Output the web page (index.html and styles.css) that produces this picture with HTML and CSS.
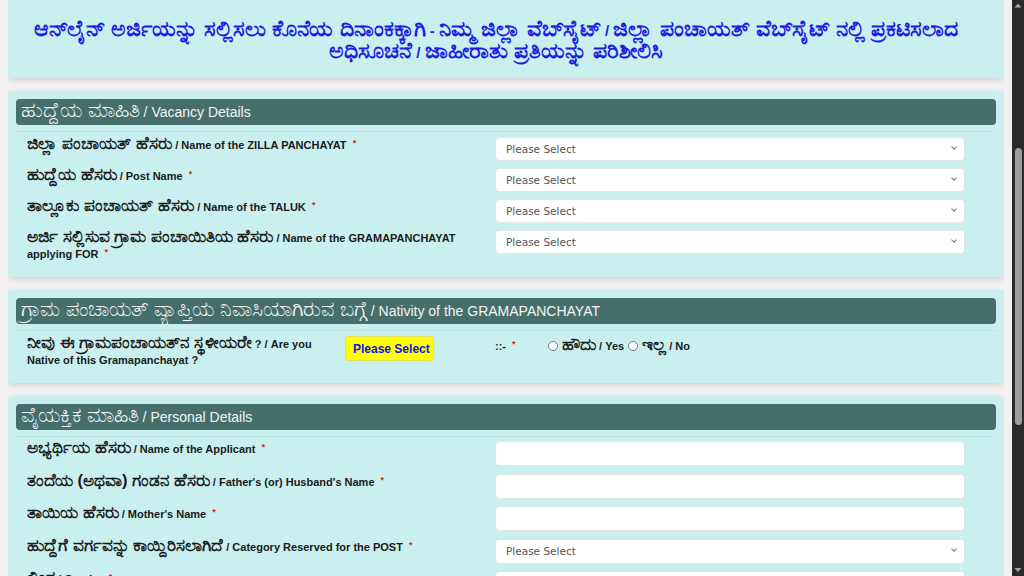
FILE: index.html
```html
<!DOCTYPE html>
<html lang="kn">
<head>
<meta charset="utf-8">
<title>Application Form</title>
<link rel="stylesheet" href="styles.css">
</head>
<body>
<div class="page">
  <div class="card notice">
    <p class="notice-text"><span class="kn">ಆನ್‍ಲೈನ್ ಅರ್ಜಿಯನ್ನು ಸಲ್ಲಿಸಲು ಕೊನೆಯ ದಿನಾಂಕಕ್ಕಾಗಿ</span> - <span class="kn">ನಿಮ್ಮ ಜಿಲ್ಲಾ ವೆಬ್‍ಸೈಟ್</span> / <span class="kn">ಜಿಲ್ಲಾ ಪಂಚಾಯತ್ ವೆಬ್‍ಸೈಟ್ ನಲ್ಲಿ ಪ್ರಕಟಿಸಲಾದ ಅಧಿಸೂಚನೆ</span> / <span class="kn">ಜಾಹೀರಾತು ಪ್ರತಿಯನ್ನು ಪರಿಶೀಲಿಸಿ</span></p>
  </div>

  <div class="card">
    <div class="card-head"><span class="kn">ಹುದ್ದೆಯ ಮಾಹಿತಿ</span> / Vacancy Details</div>
    <div class="card-body">
      <div class="row">
        <label class="lbl"><span class="kn">ಜಿಲ್ಲಾ ಪಂಚಾಯತ್ ಹೆಸರು</span> / Name of the ZILLA PANCHAYAT <span class="req">*</span></label>
        <div class="sel-wrap"><select class="ctl"><option>Please Select</option></select></div>
      </div>
      <div class="row">
        <label class="lbl"><span class="kn">ಹುದ್ದೆಯ ಹೆಸರು</span> / Post Name <span class="req">*</span></label>
        <div class="sel-wrap"><select class="ctl"><option>Please Select</option></select></div>
      </div>
      <div class="row">
        <label class="lbl"><span class="kn">ತಾಲ್ಲೂಕು ಪಂಚಾಯತ್ ಹೆಸರು</span> / Name of the TALUK <span class="req">*</span></label>
        <div class="sel-wrap"><select class="ctl"><option>Please Select</option></select></div>
      </div>
      <div class="row">
        <label class="lbl"><span class="kn">ಅರ್ಜಿ ಸಲ್ಲಿಸುವ ಗ್ರಾಮ ಪಂಚಾಯಿತಿಯ ಹೆಸರು</span> / Name of the GRAMAPANCHAYAT applying FOR <span class="req">*</span></label>
        <div class="sel-wrap"><select class="ctl"><option>Please Select</option></select></div>
      </div>
    </div>
  </div>

  <div class="card">
    <div class="card-head"><span class="kn">ಗ್ರಾಮ ಪಂಚಾಯತ್ ವ್ಯಾಪ್ತಿಯ ನಿವಾಸಿಯಾಗಿರುವ ಬಗ್ಗೆ</span> / Nativity of the GRAMAPANCHAYAT</div>
    <div class="card-body">
      <div class="row native-row">
        <label class="lbl"><span class="kn">ನೀವು ಈ ಗ್ರಾಮಪಂಚಾಯತ್‍ನ ಸ್ಥಳೀಯರೇ</span> ? / Are you Native of this Gramapanchayat ?</label>
        <div class="yellow-cell"><select class="yellow-select"><option>Please Select</option></select></div>
        <div class="sep">::- <span class="req">*</span></div>
        <div class="radios">
          <label class="radio"><input type="radio" name="native"> <span><span class="kn">ಹೌದು</span> / Yes</span></label>
          <label class="radio"><input type="radio" name="native"> <span><span class="kn">ಇಲ್ಲ</span> / No</span></label>
        </div>
      </div>
    </div>
  </div>

  <div class="card">
    <div class="card-head"><span class="kn">ವೈಯಕ್ತಿಕ ಮಾಹಿತಿ</span> / Personal Details</div>
    <div class="card-body personal">
      <div class="row">
        <label class="lbl"><span class="kn">ಅಭ್ಯರ್ಥಿಯ ಹೆಸರು</span> / Name of the Applicant <span class="req">*</span></label>
        <input class="ctl" type="text">
      </div>
      <div class="row">
        <label class="lbl"><span class="kn">ತಂದೆಯ (ಅಥವಾ) ಗಂಡನ ಹೆಸರು</span> / Father's (or) Husband's Name <span class="req">*</span></label>
        <input class="ctl" type="text">
      </div>
      <div class="row">
        <label class="lbl"><span class="kn">ತಾಯಿಯ ಹೆಸರು</span> / Mother's Name <span class="req">*</span></label>
        <input class="ctl" type="text">
      </div>
      <div class="row">
        <label class="lbl"><span class="kn">ಹುದ್ದೆಗೆ ವರ್ಗವನ್ನು ಕಾಯ್ದಿರಿಸಲಾಗಿದೆ</span> / Category Reserved for the POST <span class="req">*</span></label>
        <div class="sel-wrap"><select class="ctl"><option>Please Select</option></select></div>
      </div>
      <div class="row">
        <label class="lbl"><span class="kn">ಲಿಂಗ</span> / Gender <span class="req">*</span></label>
        <div class="sel-wrap"><select class="ctl"><option>Please Select</option></select></div>
      </div>
    </div>
  </div>
</div>

<svg class="scrollbar" width="12" height="576" viewBox="0 0 12 576" aria-hidden="true">
  <rect x="0" y="0" width="12" height="576" fill="#2a2a2a"/>
  <path d="M2.5 7.5 L6 3.5 L9.5 7.5 Z" fill="#a3a3a3"/>
  <rect x="3" y="148" width="7" height="277" rx="3.5" fill="#9e9e9e"/>
  <path d="M2.5 568 L9.5 568 L6 572 Z" fill="#a3a3a3"/>
</svg>
</body>
</html>
```

FILE: styles.css
```css
html {
  background: #f1f1f1;
  overflow: hidden;
}

body {
  margin: 0 20px 0 8px;
  font-family: "Liberation Sans", Arial, sans-serif;
  color: #1a1a1a;
  background: #f1f1f1;
}

.kn {
  font-size: 1.5em;
  line-height: 0;
}

.card {
  background: #c9f0ef;
  border-radius: 4px;
  box-shadow: 0 2px 6px rgba(0, 0, 0, 0.14);
  padding: 8px;
  margin-bottom: 13px;
}

.notice {
  padding: 20px 28px 14px 8px;
}

.notice-text {
  margin: 0;
  text-align: center;
  color: #1c1ce6;
  font-weight: bold;
  font-size: 15px;
  line-height: 22px;
}

.notice-text .kn {
  font-size: 1.45em;
}

.card-head {
  background: #466f6b;
  color: #f4f4f4;
  border-radius: 4px;
  height: 26px;
  line-height: 26px;
  padding: 0 5px;
  font-size: 14px;
  white-space: nowrap;
  overflow: hidden;
}

.card-head .kn {
  font-size: 1.47em;
}

.card-body {
  margin-top: 6px;
  border-top: 1px solid rgba(0, 70, 70, 0.06);
  padding: 5px 31px 0 11px;
}

.personal {
  padding-top: 4px;
}

.row {
  display: grid;
  grid-template-columns: 1fr 470px;
  column-gap: 25px;
  align-items: start;
  margin-bottom: 7px;
}

.personal .row {
  margin-bottom: 7.5px;
}

.lbl {
  font-size: 11px;
  font-weight: bold;
  line-height: 16px;
  color: #1a1a1a;
}

.req {
  color: #e02020;
  font-size: 9px;
  line-height: 0;
  vertical-align: 3px;
  margin-left: 3px;
}

.sel-wrap {
  position: relative;
}

.sel-wrap::after {
  content: "";
  position: absolute;
  right: 9px;
  top: 8px;
  width: 3px;
  height: 3px;
  border-right: 1px solid #777;
  border-bottom: 1px solid #777;
  transform: rotate(45deg);
  pointer-events: none;
}

.ctl {
  display: block;
  box-sizing: border-box;
  width: 470px;
  height: 24px;
  margin: 0;
  padding: 0 10px;
  background: #fff;
  border: 1px solid #dde5e5;
  border-radius: 4px;
  font-family: "DejaVu Sans", sans-serif;
  font-size: 10.5px;
  color: #555;
  -webkit-appearance: none;
  appearance: none;
  outline: none;
}

.personal .ctl {
  height: 25px;
}

.native-row {
  grid-template-columns: 303px 165px 53px 1fr;
  column-gap: 0;
}

.yellow-cell {
  padding-left: 15px;
}

.yellow-select {
  display: block;
  width: 89px;
  height: 25px;
  box-sizing: border-box;
  margin: 0;
  padding: 0 1px 0 7px;
  background: #ffff00;
  border: 1px solid #e8e060;
  border-radius: 3px;
  color: #1010f0;
  font-family: "Liberation Sans", Arial, sans-serif;
  font-weight: bold;
  font-size: 12px;
  -webkit-appearance: none;
  appearance: none;
  outline: none;
  overflow: hidden;
}

.sep {
  font-size: 11px;
  font-weight: bold;
  line-height: 16px;
  padding-top: 2px;
}

.radios {
  display: flex;
  align-items: center;
  gap: 4px;
  font-size: 11px;
  font-weight: bold;
  line-height: 16px;
  padding-top: 2px;
}

.radio {
  display: flex;
  align-items: center;
  gap: 4px;
}

.radio input {
  width: 10px;
  height: 10px;
  margin: 0;
}

.scrollbar {
  position: fixed;
  top: 0;
  right: 0;
  display: block;
}
```
